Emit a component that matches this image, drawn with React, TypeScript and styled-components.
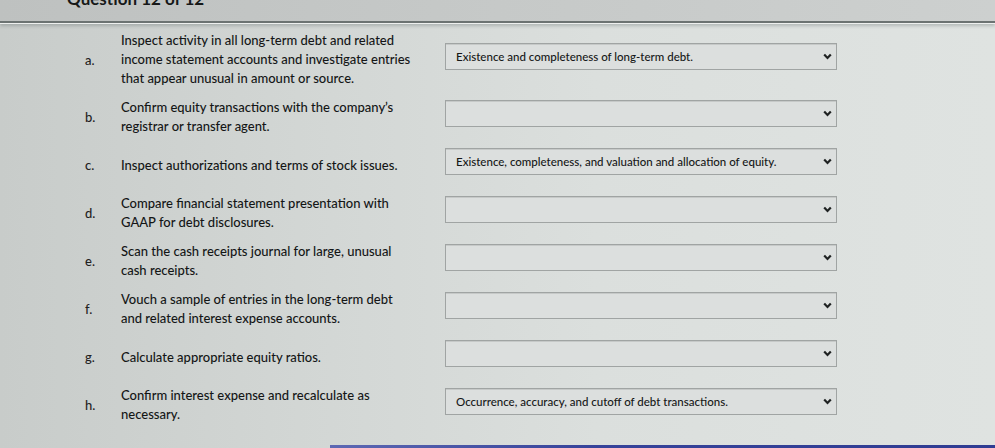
import styled, { createGlobalStyle } from "styled-components";

const GlobalStyle = createGlobalStyle`
  html, body {
    margin: 0;
    padding: 0;
    width: 995px;
    height: 448px;
    overflow: hidden;
    font-family: Lato, "Open Sans", "Liberation Sans", sans-serif;
  }
`;

type Item = {
  label: string;
  text: string[];
  answer: string;
};

const items: Item[] = [
  {
    label: "a.",
    text: [
      "Inspect activity in all long-term debt and related",
      "income statement accounts and investigate entries",
      "that appear unusual in amount or source.",
    ],
    answer: "Existence and completeness of long-term debt.",
  },
  {
    label: "b.",
    text: ["Confirm equity transactions with the company’s", "registrar or transfer agent."],
    answer: "",
  },
  {
    label: "c.",
    text: ["Inspect authorizations and terms of stock issues."],
    answer: "Existence, completeness, and valuation and allocation of equity.",
  },
  {
    label: "d.",
    text: ["Compare financial statement presentation with", "GAAP for debt disclosures."],
    answer: "",
  },
  {
    label: "e.",
    text: ["Scan the cash receipts journal for large, unusual", "cash receipts."],
    answer: "",
  },
  {
    label: "f.",
    text: ["Vouch a sample of entries in the long-term debt", "and related interest expense accounts."],
    answer: "",
  },
  {
    label: "g.",
    text: ["Calculate appropriate equity ratios."],
    answer: "",
  },
  {
    label: "h.",
    text: ["Confirm interest expense and recalculate as", "necessary."],
    answer: "Occurrence, accuracy, and cutoff of debt transactions.",
  },
];

const Chevron = () => (
  <svg width="9" height="7" viewBox="0 0 9 7">
    <polyline points="1.2,1.5 4.5,5 7.8,1.5" fill="none" stroke="#1f2222" strokeWidth="2.2" />
  </svg>
);

export default function App() {
  return (
    <>
      <GlobalStyle />
      <Page>
        <Header>
          <Title>Question 12 of 12</Title>
        </Header>
        <List>
          {items.map((item) => (
            <Row key={item.label}>
              <Label>{item.label}</Label>
              <Text>
                {item.text.map((line) => (
                  <Line key={line}>{line}</Line>
                ))}
              </Text>
              <Select>
                <Value>{item.answer}</Value>
                <Chevron />
              </Select>
            </Row>
          ))}
        </List>
        <Footer>
          <FooterBar />
        </Footer>
      </Page>
    </>
  );
}

const Page = styled.div`
  width: 995px;
  height: 448px;
  display: flex;
  flex-direction: column;
  background: linear-gradient(90deg, #c8ccca 0%, #d2d6d4 30%, #dbdfdd 60%, #dfe3e1 100%);
  color: #161818;
`;

const Header = styled.div`
  height: 21px;
  flex: none;
  overflow: hidden;
  background: linear-gradient(90deg, #bec1c0 0%, #c6c9c8 50%, #cdd0cf 100%);
  border-bottom: 2px solid #6c7372;
  box-shadow: 0 1px 0 #eef0ef, 0 3px 3px rgba(60, 70, 70, 0.25);
  padding-left: 67px;
`;

const Title = styled.div`
  margin-top: -12px;
  font-size: 17px;
  font-weight: 700;
  color: #161818;
`;

const List = styled.div`
  flex: 1;
  display: flex;
  flex-direction: column;
  gap: 10px;
  padding: 8px 0 0 85px;
`;

const Row = styled.div`
  display: flex;
  align-items: center;
  min-height: 38px;
`;

const Label = styled.div`
  width: 36px;
  flex: none;
  font-size: 13px;
  font-weight: 500;
  color: #1f2121;
`;

const Text = styled.div`
  width: 300px;
  flex: none;
  margin-right: 24px;
  font-size: 13px;
  font-weight: 500;
  line-height: 19px;
  color: #141616;
`;

const Line = styled.div`
  white-space: nowrap;
`;

const Select = styled.div`
  width: 392px;
  height: 27px;
  box-sizing: border-box;
  display: flex;
  align-items: center;
  justify-content: space-between;
  padding: 0 4px 0 10px;
  margin-top: -7px;
  border: 1px solid #a0a4a3;
  background: #dcdfde;
  box-shadow: inset 0 1px 0 #c6c9c8;
`;

const Value = styled.span`
  font-size: 11.5px;
  font-weight: 500;
  color: #161818;
`;

const Footer = styled.div`
  height: 3px;
  flex: none;
  display: flex;
  justify-content: flex-end;
`;

const FooterBar = styled.div`
  width: 665px;
  background: linear-gradient(90deg, #5d68b3 0%, #36439a 40%, #2f3c92 100%);
`;
